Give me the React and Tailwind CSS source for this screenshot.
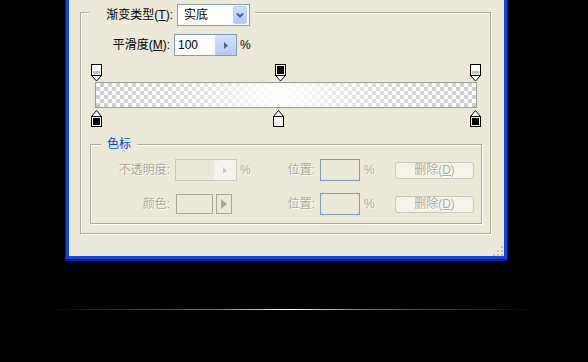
import React from "react";

const DIS = "text-[#ACA899] [text-shadow:1px_1px_0_#fff]";

function TopStop({ left, dark }) {
  return (
    <svg className="absolute top-0" style={{ left }} width="11" height="18" viewBox="0 0 11 18">
      <path d="M0.5 11.5 L5.5 17 L10.5 11.5" fill="#fff" stroke="#000" strokeWidth="1" />
      <rect x="0.5" y="0.5" width="10" height="11" fill="#fff" stroke="#000" strokeWidth="1" />
      {dark ? (
        <rect x="2" y="2" width="7" height="8" fill="#000" />
      ) : (
        <>
          <rect x="2" y="2" width="7" height="5" fill="#fff" />
          <rect x="2" y="7" width="7" height="3" fill="#C4C4C4" />
        </>
      )}
    </svg>
  );
}

function BottomStop({ left, color }) {
  return (
    <svg className="absolute top-0" style={{ left }} width="11" height="17" viewBox="0 0 11 17">
      <path d="M0.5 6.5 L5.5 0.5 L10.5 6.5" fill="#fff" stroke="#000" strokeWidth="1" />
      <rect x="0.5" y="6.5" width="10" height="10" fill="#fff" stroke="#000" strokeWidth="1" />
      <rect x="2" y="8" width="7" height="7" fill={color} />
    </svg>
  );
}

function DelButton() {
  return (
    <div className={`ml-[17px] w-[79px] h-[17px] rounded-[3px] border border-[#C9C7BA] bg-[#F5F4EA] flex items-center justify-center leading-none ${DIS}`}>
      删除(<span className="underline underline-offset-1">D</span>)
    </div>
  );
}

function PosGroup() {
  return (
    <>
      <div className={`w-[61px] text-right ${DIS}`}>位置:</div>
      <div className="ml-[5px] w-[40px] h-[22px] border border-[#7F9DB9]" />
      <div className={`ml-[4px] w-[14px] ${DIS}`}>%</div>
      <DelButton />
    </>
  );
}

export default function App() {
  return (
    <div className="w-[588px] h-[362px] bg-black overflow-hidden font-['Liberation_Sans','Noto_Sans_CJK_SC',sans-serif] text-[12px] leading-[14px] text-black">
      <div className="ml-[65px] w-[443px] h-[261px] bg-[#0019A6] px-px pb-[2px]">
        <div className="h-full border-x-[3px] border-b-[3px] border-[#0B47E0] bg-[#ECE9D8] flex flex-col">
          {/* outer group */}
          <div className="mt-[12px] ml-[11px] mr-[13px] border border-[#ACA899] shadow-[inset_1px_1px_0_#fff,1px_1px_0_#fff] pb-[9px]">
            {/* title row */}
            <div className="-mt-[9px] ml-[8px] w-fit flex items-center bg-[#ECE9D8] pr-[5px] h-[22px]">
              <div className="w-[84px] text-right">
                渐变类型(<span className="underline underline-offset-1">T</span>):
              </div>
              <div className="ml-[4px] w-[73px] h-[22px] border border-[#7F9DB9] bg-white flex items-center pl-[6px]">
                <span>实底</span>
                <div className="ml-auto mr-[2px] w-[14px] h-[18px] rounded-[2px] border border-[#B8CCF6] bg-[linear-gradient(#D0DEFD,#B1C8F9)] flex items-center justify-center">
                  <svg width="8" height="6" viewBox="0 0 8 6">
                    <path d="M1 1.5 L4 4.5 L7 1.5" fill="none" stroke="#4D6185" strokeWidth="2" />
                  </svg>
                </div>
              </div>
            </div>
            {/* smoothness */}
            <div className="mt-[8px] flex items-center h-[22px]">
              <div className="w-[89px] text-right">
                平滑度(<span className="underline underline-offset-1">M</span>):
              </div>
              <div className="ml-[4px] w-[63px] h-[22px] border border-[#7F9DB9] bg-white flex">
                <div className="flex-1 pl-[3px] flex items-center">100</div>
                <div className="w-[21px] bg-[linear-gradient(#D6E2FC,#B7CBF7)] flex items-center justify-center">
                  <svg width="4" height="7" viewBox="0 0 4 7">
                    <path d="M0 0 L4 3.5 L0 7 Z" fill="#4D6185" />
                  </svg>
                </div>
              </div>
              <div className="ml-[3px]">%</div>
            </div>
            {/* gradient widget */}
            <div className="mt-[8px] ml-[14px] w-[382px]">
              <div className="relative h-[18px]">
                <TopStop left={-4} />
                <TopStop left={180} dark />
                <TopStop left={375} />
              </div>
              <div className="h-[26px] border border-[#9A9A9A] bg-[conic-gradient(#CCCCCC_25%,#fff_0_50%,#CCCCCC_0_75%,#fff_0)] bg-[length:8px_8px]">
                <div className="h-full bg-[linear-gradient(to_right,rgba(255,255,255,0),rgba(255,255,255,0.35)_25%,#fff_48%,rgba(255,255,255,0.35)_72%,rgba(255,255,255,0))]" />
              </div>
              <div className="relative mt-[2px] h-[17px]">
                <BottomStop left={-4} color="#000" />
                <BottomStop left={178} color="#fff" />
                <BottomStop left={375} color="#000" />
              </div>
            </div>
            {/* inner group */}
            <div className="mt-[17px] ml-[9px] mr-[8px] border border-[#ACA899] shadow-[inset_1px_1px_0_#fff,1px_1px_0_#fff] pb-[8px]">
              <div className="-mt-[8px] ml-[10px] w-fit px-[6px] bg-[#ECE9D8] text-[#0046D5] h-[14px] leading-[14px]">
                色标
              </div>
              <div className="mt-[8px] flex items-center h-[22px]">
                <div className={`w-[79px] text-right ${DIS}`}>不透明度:</div>
                <div className="ml-[5px] w-[62px] h-[22px] border border-[#C9C7BA] flex">
                  <div className="flex-1" />
                  <div className="w-[22px] bg-[#F4F3EE] flex items-center justify-center">
                    <svg width="4" height="7" viewBox="0 0 4 7">
                      <path d="M0 0 L4 3.5 L0 7 Z" fill="#C9C7BA" />
                    </svg>
                  </div>
                </div>
                <div className={`ml-[3px] w-[14px] ${DIS}`}>%</div>
                <PosGroup />
              </div>
              <div className="mt-[12px] flex items-center h-[22px]">
                <div className={`w-[79px] text-right ${DIS}`}>颜色:</div>
                <div className="ml-[6px] w-[37px] h-[20px] border border-[#ACA899]" />
                <div className="ml-[3px] w-[16px] h-[20px] border border-[#ACA899] flex items-center justify-center">
                  <svg width="6" height="10" viewBox="0 0 6 10">
                    <path d="M0 0 L6 5 L0 10 Z" fill="#ACA899" />
                  </svg>
                </div>
                <div className="w-[22px]" />
                <PosGroup />
              </div>
            </div>
          </div>
          <div className="flex-1 flex items-end justify-end">
            <svg width="12" height="12" viewBox="0 0 12 12">
              <rect x="9" y="2" width="2" height="2" fill="#C2BFAE" />
              <rect x="5" y="6" width="2" height="2" fill="#C2BFAE" />
              <rect x="9" y="6" width="2" height="2" fill="#C2BFAE" />
              <rect x="1" y="10" width="2" height="2" fill="#C2BFAE" />
              <rect x="5" y="10" width="2" height="2" fill="#C2BFAE" />
              <rect x="9" y="10" width="2" height="2" fill="#C2BFAE" />
            </svg>
          </div>
        </div>
      </div>
      <div className="mt-[48px] ml-[40px] w-[500px] h-px bg-[linear-gradient(to_right,rgba(255,255,255,0),rgba(255,255,255,0.45)_35%,#fff_50%,rgba(255,255,255,0.45)_65%,rgba(255,255,255,0))]" />
    </div>
  );
}
